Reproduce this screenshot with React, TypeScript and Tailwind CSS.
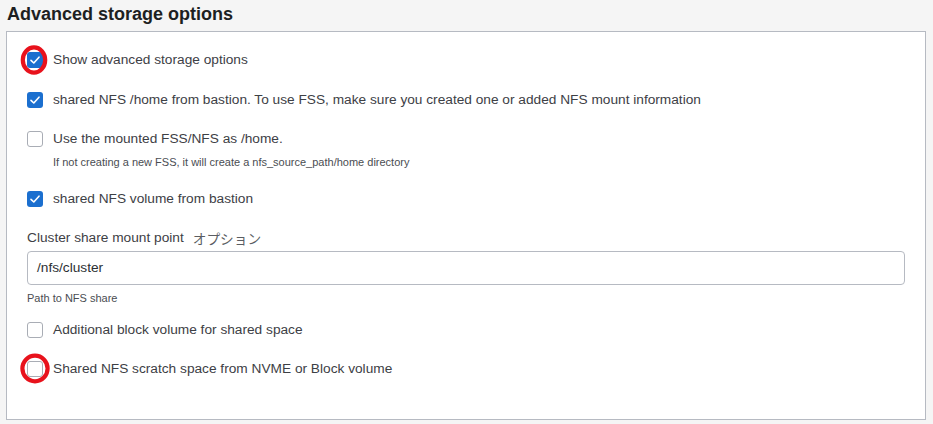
import React from "react";

function Check({ checked, ring }: { checked?: boolean; ring?: "a" | "b" }) {
  return (
    <span className="relative flex h-4 w-4 shrink-0">
      {checked ? (
        <span className="flex h-4 w-4 items-center justify-center rounded-[3px] bg-[#1b6fcf]">
          <svg width="12" height="12" viewBox="0 0 12 12" fill="none">
            <polyline points="2,6.3 4.8,9 10,3.2" stroke="#ffffff" strokeWidth="1.6" strokeLinecap="round" strokeLinejoin="round" />
          </svg>
        </span>
      ) : (
        <span className="h-4 w-4 rounded-[3px] border border-[#a9adb5] bg-white" />
      )}
      {ring === "a" && (
        <svg className="absolute left-[-7px] top-[-7px]" width="28" height="30" viewBox="0 0 28 30">
          <ellipse cx="14" cy="15" rx="11.2" ry="12.7" fill="none" stroke="#e8121c" strokeWidth="4.2" />
        </svg>
      )}
      {ring === "b" && (
        <svg className="absolute left-[-7px] top-[-8px]" width="31" height="31" viewBox="0 0 31 31">
          <ellipse cx="15" cy="15.5" rx="12.6" ry="12.8" fill="none" stroke="#e8121c" strokeWidth="4.2" />
        </svg>
      )}
    </span>
  );
}

function Row({ checked, ring, label, className }: { checked?: boolean; ring?: "a" | "b"; label: string; className?: string }) {
  return (
    <div className={"flex h-4 items-center gap-[10px] " + (className ?? "")}>
      <Check checked={checked} ring={ring} />
      <span className="text-[13.7px] leading-4 text-[#3d4045]">{label}</span>
    </div>
  );
}

export default function App() {
  return (
    <div className="h-[424px] w-[933px] bg-[#f5f5f5] pt-[3px] font-['Liberation_Sans',Arial,sans-serif]">
      <h1 className="ml-[7px] h-[28px] text-[18px] font-bold leading-[22px] text-[#1d1f22]">Advanced storage options</h1>
      <div className="ml-[6px] h-[389px] w-[920px] border border-[#b6bac2] bg-white px-[20px] pt-[20px]">
        <Row checked ring="a" label="Show advanced storage options" />
        <Row checked className="mt-[24px]" label="shared NFS /home from bastion. To use FSS, make sure you created one or added NFS mount information" />
        <Row className="mt-[23px]" label="Use the mounted FSS/NFS as /home." />
        <div className="ml-[26px] mt-[9px] text-[11px] leading-[12px] text-[#4a4d52]">If not creating a new FSS, it will create a nfs_source_path/home directory</div>
        <Row checked className="mt-[23px]" label="shared NFS volume from bastion" />
        <div className="mt-[23px] flex h-4 items-center text-[13.7px] leading-4 text-[#3d4045]">
          <span>Cluster share mount point</span>
          <span className="ml-[9px] font-['Noto_Sans_CJK_JP',sans-serif] text-[#5a5d62]">オプション</span>
        </div>
        <div className="mt-[5px] flex h-[34px] w-[878px] items-center rounded-[4px] border border-[#b6bac2] px-[9px] text-[13.7px] text-[#2c2f33]">/nfs/cluster</div>
        <div className="mt-[7px] text-[11px] leading-[12px] text-[#4a4d52]">Path to NFS share</div>
        <Row className="mt-[18px]" label="Additional block volume for shared space" />
        <Row ring="b" className="mt-[23px]" label="Shared NFS scratch space from NVME or Block volume" />
      </div>
    </div>
  );
}
